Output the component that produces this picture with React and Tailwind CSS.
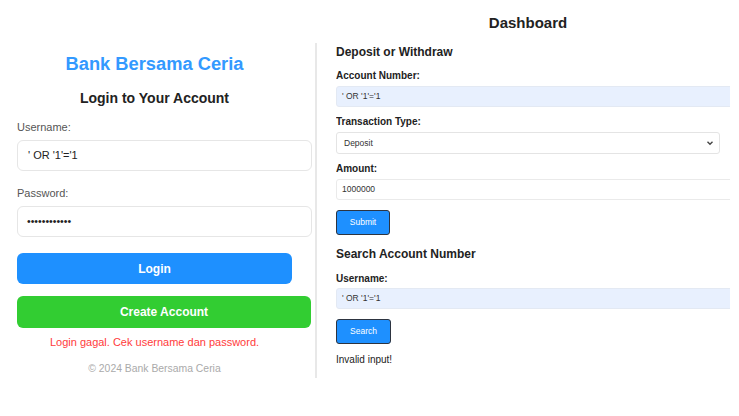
export default function App() {
  const font = { fontFamily: '"Liberation Sans", Arial, sans-serif' };
  return (
    <div className="w-[739px] h-[416px] bg-white flex overflow-hidden" style={font}>
      {/* Left panel */}
      <div className="w-[317px] mt-[43px] h-[335px] border-r-2 border-[#e8e8e8] flex flex-col shrink-0">
        <div className="w-[275px] ml-[17px] flex flex-col">
          <div className="mt-[10px] h-[22px] leading-[22px] text-center text-[18.3px] font-bold text-[#3399ff]">
            Bank Bersama Ceria
          </div>
          <div className="mt-[14px] h-[18px] leading-[18px] text-center text-[14px] font-bold text-[#222]">
            Login to Your Account
          </div>
          <div className="mt-[13px] h-[14px] leading-[14px] text-[11px] text-[#555]">Username:</div>
          <div className="mt-[6px] w-[295px] h-[31px] rounded-[6px] border-[1.5px] border-[#e6e6e6] flex items-center pl-[10px] text-[11px] text-[#222]">
            ' OR '1'='1
          </div>
          <div className="mt-[15px] h-[14px] leading-[14px] text-[11px] text-[#555]">Password:</div>
          <div className="mt-[6px] w-[295px] h-[31px] rounded-[6px] border-[1.5px] border-[#e6e6e6] flex items-center pl-[9px] text-[10.5px] text-[#222]">
            ••••••••••••
          </div>
          <div className="mt-[16px] w-[275px] h-[31px] rounded-[6px] bg-[#1e90ff] flex items-center justify-center text-white text-[12px] font-bold">
            Login
          </div>
          <div className="mt-[12px] w-[294px] h-[32px] rounded-[6px] bg-[#32cd32] flex items-center justify-center text-white text-[12px] font-bold">
            Create Account
          </div>
          <div className="mt-[7px] h-[14px] leading-[14px] text-center text-[11px] text-[#ff3b3b]">
            Login gagal. Cek username dan password.
          </div>
          <div className="mt-[13px] h-[14px] leading-[14px] text-center text-[10.4px] text-[#aaa]">
            © 2024 Bank Bersama Ceria
          </div>
        </div>
      </div>

      {/* Right panel */}
      <div className="flex-1 flex flex-col">
        <div className="mt-[13px] h-[20px] leading-[20px] text-center text-[15px] font-bold text-[#222]">
          Dashboard
        </div>
        <div className="ml-[19px] w-[394px] overflow-hidden flex flex-col">
          <div className="mt-[11px] h-[16px] leading-[16px] text-[12px] font-bold text-[#222]">Deposit or Withdraw</div>
          <div className="mt-[10px] h-[12px] leading-[12px] text-[10px] font-bold text-[#222]">Account Number:</div>
          <div className="mt-[4px] w-[404px] h-[21px] bg-[#e8f0fe] border border-[#e3e9f3] rounded-[3px] flex items-center pl-[5px] text-[8.5px] text-[#333]">
            ' OR '1'='1
          </div>
          <div className="mt-[9px] h-[12px] leading-[12px] text-[10px] font-bold text-[#222]">Transaction Type:</div>
          <div className="mt-[4px] w-[384px] h-[22px] border border-[#e4e4e4] rounded-[3px] flex items-center justify-between pl-[7px] pr-[5px] text-[8.5px] text-[#333]">
            <span>Deposit</span>
            <svg width="8" height="8" viewBox="0 0 8 8">
              <path d="M1.5 2.8 L4 5.2 L6.5 2.8" fill="none" stroke="#444" strokeWidth="1.4" />
            </svg>
          </div>
          <div className="mt-[9px] h-[12px] leading-[12px] text-[10px] font-bold text-[#222]">Amount:</div>
          <div className="mt-[4px] w-[404px] h-[21px] border border-[#eaeaea] rounded-[3px] flex items-center pl-[5px] text-[8.5px] text-[#333]">
            1000000
          </div>
          <div className="mt-[10px] w-[54px] h-[25px] bg-[#1e90ff] border-[1.5px] border-[#2d3440] rounded-[3px] flex items-center justify-center text-white text-[8.5px]">
            Submit
          </div>
          <div className="mt-[11px] h-[16px] leading-[16px] text-[12px] font-bold text-[#222]">Search Account Number</div>
          <div className="mt-[11px] h-[12px] leading-[12px] text-[10px] font-bold text-[#222]">Username:</div>
          <div className="mt-[3px] w-[404px] h-[21px] bg-[#e8f0fe] border border-[#e3e9f3] rounded-[3px] flex items-center pl-[5px] text-[8.5px] text-[#333]">
            ' OR '1'='1
          </div>
          <div className="mt-[10px] w-[55px] h-[25px] bg-[#1e90ff] border-[1.5px] border-[#2d3440] rounded-[3px] flex items-center justify-center text-white text-[8.5px]">
            Search
          </div>
          <div className="mt-[10px] h-[12px] leading-[12px] text-[10px] text-[#222]">Invalid input!</div>
        </div>
      </div>
    </div>
  );
}
